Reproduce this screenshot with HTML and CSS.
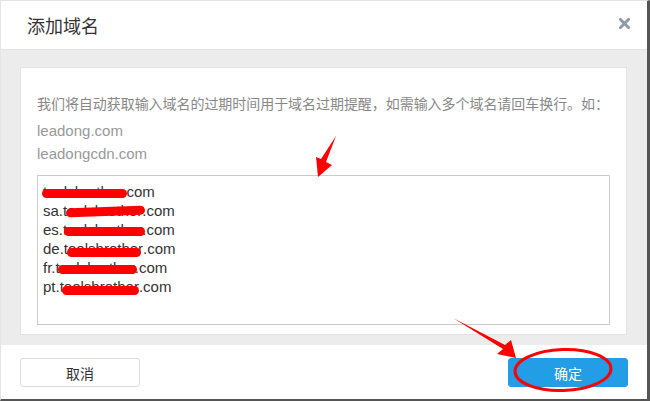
FILE: index.html
```html
<!DOCTYPE html>
<html lang="zh-CN">
<head>
<meta charset="UTF-8">
<title>添加域名</title>
<link rel="stylesheet" href="styles.css">
</head>
<body>
<div class="dialog">
    <div class="dialog-header">
        <h3>添加域名</h3>
        <span class="close">
            <svg width="11" height="11" viewBox="0 0 11 11"><path d="M1.5 1.5 L9.5 9.5 M9.5 1.5 L1.5 9.5" stroke="#8d9aa9" stroke-width="3" stroke-linecap="square"/></svg>
        </span>
    </div>

    <div class="dialog-body">
        <div class="panel">
            <p class="tip">我们将自动获取输入域名的过期时间用于域名过期提醒，如需输入多个域名请回车换行。如：</p>
            <p class="example">leadong.com</p>
            <p class="example">leadongcdn.com</p>
            <div class="domain-box">
                <div><span class="redact r1">toolsbrother</span>.com</div>
                <div>sa.<span class="redact r2">toolsbrother</span>.com</div>
                <div>es.<span class="redact r3">toolsbrother</span>.com</div>
                <div>de.<span class="redact r4">toolsbrother</span>.com</div>
                <div>fr.<span class="redact r5">toolsbrother</span>.com</div>
                <div>pt.<span class="redact r6">toolsbrother</span>.com</div>
            </div>
        </div>
    </div>

    <div class="dialog-footer">
        <button type="button" class="btn">取消</button>
        <button type="button" class="btn btn-primary">确定</button>
    </div>

    <!-- red annotations drawn over the screenshot -->
    <svg class="marks" width="650" height="401" viewBox="0 0 650 401">
        <polygon points="336,136 326,162 332,165 318,177 316,157 321,159" fill="#f00"/>
        <polygon points="453,318 505,345 511,340 516,358 497,354 503,349" fill="#f00"/>
        <ellipse cx="563" cy="370" rx="48" ry="20.5" fill="none" stroke="#f00" stroke-width="3" transform="rotate(-2 563 370)"/>
    </svg>
</div>
</body>
</html>
```

FILE: styles.css
```css
body {
    margin: 0;
    padding: 0;
    font-family: "Liberation Sans", "Noto Sans CJK SC", sans-serif;
    background-color: #fff;
}

.dialog {
    position: relative;
    width: 650px;
    height: 401px;
    box-sizing: border-box;
    border-top: 1px solid #e4e4e4;
    border-left: 1px solid #e4e4e4;
    border-right: 3px solid #555;
    border-bottom: 2px solid #555;
    display: flex;
    flex-direction: column;
}

.dialog-header {
    height: 48px;
    border-bottom: 1px solid #e2e2e2;
    display: flex;
    align-items: center;
    justify-content: space-between;
    padding: 0 17px 0 26px;
}

.dialog-header h3 {
    margin: 0;
    font-size: 18px;
    font-weight: normal;
    color: #333;
    font-family: "Noto Sans CJK SC", sans-serif;
}

.close {
    display: flex;
    margin-top: -3px;
}

.dialog-body {
    height: 295px;
    box-sizing: border-box;
    background-color: #ececec;
    padding: 17px 20px 10px 19px;
}

.panel {
    background-color: #fff;
    border: 1px solid #e3e3e3;
    height: 100%;
    box-sizing: border-box;
    padding: 25px 16px 10px 16px;
}

.tip {
    margin: 0 0 6px 0;
    font-size: 14px;
    line-height: 20px;
    color: #888;
    white-space: nowrap;
    letter-spacing: -0.05px;
    font-family: "Noto Sans CJK SC", sans-serif;
}

.example {
    margin: 0;
    font-size: 15px;
    line-height: 23px;
    color: #999;
}

.domain-box {
    margin-top: 10px;
    height: 150px;
    box-sizing: border-box;
    border: 1px solid #ccc;
    padding: 6px 5px;
    font-size: 15px;
    line-height: 19px;
    color: #333;
}

.redact {
    position: relative;
}

.redact::after {
    content: "";
    position: absolute;
    left: -1px;
    right: -5px;
    top: 6px;
    height: 9px;
    border-radius: 5px;
    background-color: #f00;
}

.r2::after { left: 3px; right: -3px; transform: rotate(-2deg); top: 5px; }
.r3::after { left: 1px; right: -3px; }
.r4::after { left: 3px; right: 2px; top: 8px; }
.r5::after { left: 2px; right: -2px; }
.r6::after { left: 2px; right: 0; top: 8px; }

.dialog-footer {
    flex: 1;
    display: flex;
    justify-content: space-between;
    align-items: flex-start;
    padding: 13px 19px 0 19px;
}

.btn {
    width: 120px;
    height: 29px;
    font-size: 14px;
    font-family: "Noto Sans CJK SC", sans-serif;
    color: #333;
    background-color: #fff;
    border: 1px solid #ddd;
    border-radius: 3px;
    padding: 0;
}

.btn-primary {
    background-color: #229de6;
    border-color: #229de6;
    color: #fff;
}

.marks {
    position: absolute;
    left: -1px;
    top: -1px;
    pointer-events: none;
}
```
